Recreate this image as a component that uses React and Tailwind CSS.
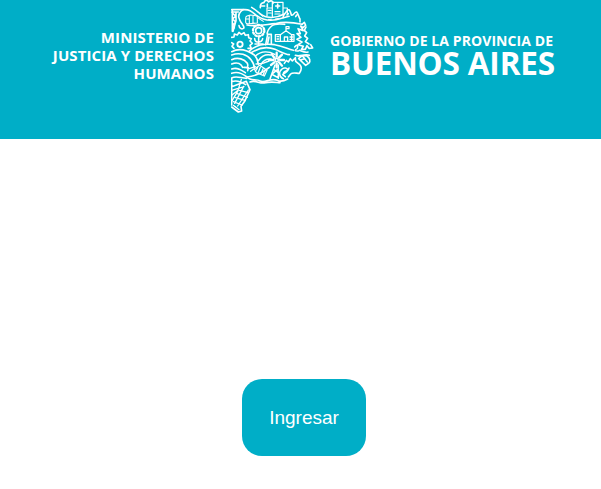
function ProvinceEmblem() {
  return (
    <svg viewBox="18 0 255 345" className="h-[115px] w-[85px] shrink-0" fill="none" stroke="#fff" strokeWidth="4.8" strokeLinecap="round" strokeLinejoin="round">
      {/* oil derrick and vine */}
      <path d="M20 29H54M20 36H40M22 29V94M33 36V62L24 94M23 40L32 48L23 57L32 66L23 76L28 84" />
      <path d="M54 29C42 37 38 48 44 59C48 70 58 76 57 84C51 89 43 86 42 77" />
      {/* road */}
      <path d="M55 29C74 27 82 36 94 46C115 62 143 64 170 55L192 49" />
      <path d="M80 22C99 33 107 47 126 51C146 55 165 49 178 42" />
      <path d="M103 41L114 50M130 58H139M151 57L162 55" strokeWidth="3" />
      {/* bus and field */}
      <path d="M76 45L66 48Q61 50 62 58V67Q64 73 71 71L97 69V48L76 45ZM73 48V70M84 47V69M64 57H72M101 55L115 64" strokeWidth="3.2" />
      <path d="M66 75C95 81 121 74 150 71C174 65 204 67 231 73" />
      {/* hospital and trees */}
      <path d="M142 50V7H174V45M126 48V24H142M174 24H187V42M130 31H138M130 39H138M150 35H165M150 42H165" strokeWidth="3.7" />
      <path d="M158 12V24M152 18H164" strokeWidth="5" />
      <path d="M106 23C105 13 109 8 117 8C118 0 129 -1 130 6C138 0 145 3 144 10M110 18H119M127 12V21" />
      <path d="M174 53C175 43 182 39 188 30C193 26 197 36 199 45C206 49 208 34 215 36C220 41 220 49 225 57V66M186 45L190 41M212 50L215 45" />
      {/* sunflower */}
      <circle cx="101" cy="92" r="9" />
      <circle cx="101" cy="92" r="17" strokeDasharray="4 6.7" strokeWidth="7" />
      <path d="M101 109V133M89 116C89 124 96 126 101 126C107 126 112 121 113 116M90 132H114" />
      {/* school */}
      <path d="M151 124V104H166V124M166 104L183 92L200 104V124M200 104H207V124M151 124H207M178 124V111H188V124M183 92V80H192V86H184M156 110H161M156 117H161M195 111H203M195 118H203" strokeWidth="3.8" />
      {/* cooling towers */}
      <path d="M122 134L128 103H139V132M127 103C125 91 133 85 140 78C150 70 169 72 179 73M132 111L128 130" />
      {/* gear */}
      <path d="M20 112L27 111L28 102L37 105L42 97L49 103L57 98L61 106L70 104L71 113L79 116L75 123L82 130L75 136L79 145L69 145" />
      <circle cx="45" cy="133" r="8" strokeWidth="5.5" />
      <path d="M20 128L26 132L21 139L27 145" />
      {/* hills */}
      <path d="M20 155C43 143 68 151 88 165C96 173 99 183 100 193M20 165C44 156 67 164 78 179C84 187 88 196 88 203" />
      <path d="M73 153C91 136 118 130 149 134C174 138 189 148 205 151M79 158C103 142 128 139 150 148C167 155 179 163 193 164M91 168C109 152 132 154 149 163M101 181C110 168 124 163 136 165M108 193C115 181 126 176 138 177" />
      <path d="M20 179C40 170 58 178 67 190C70 197 68 201 66 204M20 192C38 184 49 193 53 202M20 207C36 202 47 208 61 218M20 220C37 213 52 220 66 231C88 229 113 218 133 202M57 202L70 203L68 212" />
      {/* coast and trees on the east */}
      <path d="M231 73L238 67L242 76L234 83L227 78L235 92L219 86L226 101L216 101L228 112L216 118L231 126L219 134L235 139L229 148L241 148L246 137L252 145L263 144L257 134" />
      <path d="M243 81L238 91L245 98L239 108L248 115L241 125L252 132" />
      <path d="M209 141C216 131 220 137 217 145C208 151 207 154 220 153M223 151C230 153 239 159 249 156" />
      {/* windmill rotor and tower */}
      <g strokeWidth="7">
        <path d="M155 170V158M162 173L171 164M165 180H177M162 187L171 197M155 190V202M148 187L138 195M145 180H132M148 173L140 163" />
      </g>
      <circle cx="155" cy="180" r="5" />
      <path d="M150 195L135 237M160 195V235M146 208L160 218M158 208L140 223L160 233" />
      {/* barn and crops */}
      <path d="M88 207L104 196L126 211L118 228L94 218ZM98 203L91 214M106 202L99 219M114 207L107 223M120 211L114 226" strokeWidth="3.8" />
      <path d="M72 206L91 200M77 214L86 207M93 192L113 190L132 183" strokeWidth="4" />
      <path d="M175 236C162 232 160 216 171 207C177 202 188 203 188 211C180 214 174 215 175 222C184 217 190 211 192 204M173 224L181 230" />
      {/* hillside canopy and shore */}
      <path d="M178 190L184 181L190 186L196 176L202 183L211 173L212 184L224 194C232 201 229 211 223 220C214 220 203 216 197 222L190 231" />
      <path d="M221 176C226 168 235 165 246 168C255 175 257 184 252 189L242 196L221 176ZM235 171L247 186M226 180L239 176" />
      <path d="M211 166C225 172 238 160 253 166" />
      <path d="M66 232C77 244 94 235 106 243C120 250 139 232 157 241C168 247 179 242 188 237M75 246C91 239 102 251 117 249C137 244 151 247 165 248" />
      {/* southern plots */}
      <path d="M20 234C34 226 48 235 65 235M20 245C37 239 50 246 62 254M20 234V315M20 260L64 244L75 269L60 302L48 319L50 333L40 336L20 321" />
      <path d="M20 271L57 260M21 285L39 271M21 302L38 274L49 238M29 310L56 259M38 318L70 270M37 281L67 292M31 293L60 301M25 305L51 315M31 320L42 329M25 316L34 323M43 271L70 278" strokeWidth="4" />
    </svg>
  );
}

export default function App() {
  return (
    <div className="h-[489px] w-full overflow-hidden bg-white">
      <header className="flex h-[139px] items-start bg-[#00aec7] font-['Open_Sans','Noto_Sans',sans-serif] text-white">
        <p className="w-[214px] pt-[28px] text-right text-[15px] leading-[18px] font-bold tracking-[0.1px] whitespace-nowrap">
          MINISTERIO DE
          <br />
          JUSTICIA Y DERECHOS
          <br />
          HUMANOS
        </p>
        <div className="ml-[17px] flex">
          <ProvinceEmblem />
        </div>
        <div className="ml-[14px] flex flex-col pt-[32px] whitespace-nowrap">
          <span className="text-[14px] leading-[18px] font-bold tracking-[0.08px]">GOBIERNO DE LA PROVINCIA DE</span>
          <span className="text-[31.5px] leading-[26px] font-bold tracking-[-0.15px]">BUENOS AIRES</span>
        </div>
      </header>
      <main className="flex pt-[240px] pl-[242px]">
        <button className="h-[77px] w-[124px] rounded-[20px] bg-[#00aec7] pt-[2px] font-['Liberation_Sans',sans-serif] text-[19px] text-white">
          Ingresar
        </button>
      </main>
    </div>
  );
}
